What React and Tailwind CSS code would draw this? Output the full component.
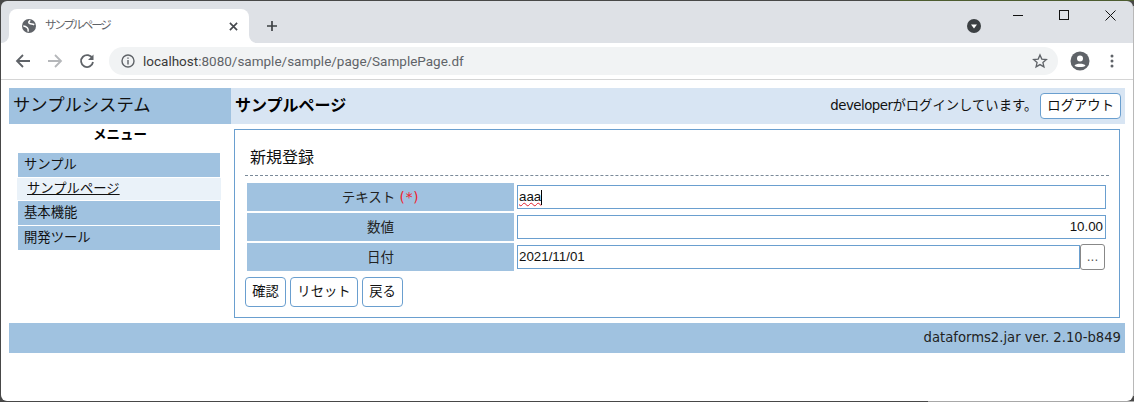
import React from "react";

function Btn({ children, cls = "" }) {
  return <button className={`h-[30px] px-[6px] bg-white border border-[#6a9fcf] rounded-[4px] text-[13.33px] text-[#111] ${cls}`}>{children}</button>;
}
function Row({ label, children, gap = "mb-[2px]" }) {
  return (
    <div className={`flex h-[28px] ${gap}`}>
      <div className="w-[267px] shrink-0 bg-[#a0c2e0] flex items-center justify-center text-[13.5px] text-[#222]">{label}</div>
      <div className="flex-1 pl-[3px] flex items-center">{children}</div>
    </div>
  );
}
const inputCls = "h-[24px] border border-[#6a9fcf] bg-white font-['Liberation_Sans','Noto_Sans_CJK_JP',sans-serif] text-[13.33px] text-[#111] px-[1px] flex items-center";

export default function App() {
  return (
    <div className="w-[1134px] h-[402px] overflow-hidden relative bg-white font-['DejaVu_Sans','Noto_Sans_CJK_JP',sans-serif] text-[#111]">
      {/* Browser chrome */}
      <div className="h-[1px] bg-[#5a5a52]" />
      <div className="h-[42px] bg-[#dee1e6] flex items-end pl-[9px] relative">
        <div className="w-[240px] h-[34px] bg-white rounded-t-[8px] flex items-center pl-[13px] pr-[11px] relative">
          <div className="absolute -left-[8px] bottom-0 w-[8px] h-[8px] bg-white"><div className="w-full h-full bg-[#dee1e6] rounded-br-[8px]" /></div>
          <div className="absolute -right-[8px] bottom-0 w-[8px] h-[8px] bg-white"><div className="w-full h-full bg-[#dee1e6] rounded-bl-[8px]" /></div>
          <svg width="14" height="14" viewBox="0 0 16 16" className="shrink-0">
            <circle cx="8" cy="8" r="8" fill="#5f6368" />
            <path d="M9.500 1.500c-1.500 1-2.500 2.500-1 3.500s3.500.5 5.500 1.500M1.500 8c2.500 0 3.500 1 4.500 2s1.500 2 1 4.500" fill="none" stroke="#fff" strokeWidth="1.800" />
          </svg>
          <span className="ml-[9px] text-[11.5px] text-[#5f6368] flex-1 tracking-[-2.2px]">サンプルページ</span>
          <svg width="9" height="9" viewBox="0 0 10 10"><path d="M1 1l8 8M9 1l-8 8" stroke="#45484d" strokeWidth="1.800" /></svg>
        </div>
        <svg width="10" height="10" viewBox="0 0 12 12" className="ml-[18px] mb-[12px]"><path d="M6 0v12M0 6h12" stroke="#3c4043" strokeWidth="2" /></svg>
        <svg width="14" height="14" viewBox="0 0 14 14" className="absolute left-[967px] top-[18px]">
          <circle cx="7" cy="7" r="7" fill="#3c4043" />
          <path d="M4 5.500h6L7 9.500Z" fill="#fff" />
        </svg>
        <svg width="10" height="1" viewBox="0 0 10 1" className="absolute left-[1013px] top-[14px]"><path d="M0 .5h10" stroke="#111" /></svg>
        <div className="absolute left-[1059px] top-[9px] w-[10px] h-[10px] border border-[#111]" />
        <svg width="11" height="11" viewBox="0 0 11 11" className="absolute left-[1105px] top-[9px]"><path d="M.5.5l10 10M10.500.5l-10 10" stroke="#111" /></svg>
      </div>
      <div className="h-[37px] bg-white border-b border-[#d5d5d5] flex items-center">
        <svg width="16" height="16" viewBox="0 0 16 16" className="ml-[15px]"><path d="M15 8H2M8 2 2 8l6 6" fill="none" stroke="#5f6368" strokeWidth="1.800" /></svg>
        <svg width="16" height="16" viewBox="0 0 16 16" className="ml-[16px]"><path d="M1 8h13M8 2l6 6-6 6" fill="none" stroke="#b5b7ba" strokeWidth="1.800" /></svg>
        <svg width="16" height="16" viewBox="0 0 16 16" className="ml-[16px]"><path d="M13.500 5.500A6 6 0 1 0 14 9" fill="none" stroke="#5f6368" strokeWidth="1.800" /><path d="M14.500 1.500v5.500H9Z" fill="#5f6368" /></svg>
        <div className="ml-[14px] w-[949px] h-[28px] rounded-full bg-[#f1f3f4] flex items-center pl-[12px]">
          <svg width="14" height="14" viewBox="0 0 14 14"><circle cx="7" cy="7" r="6" fill="none" stroke="#5f6368" strokeWidth="1.400" /><path d="M7 6v4.500M7 3.500v1.300" stroke="#5f6368" strokeWidth="1.400" /></svg>
          <span className="ml-[8px] text-[13.5px] text-[#3a3a3a] font-['Roboto',sans-serif]">localhost<span className="text-[#5f6368]">:8080/sample/sample/page/SamplePage.df</span></span>
          <svg width="16" height="16" viewBox="0 0 24 24" className="ml-auto mr-[10px]"><path d="M12 3l2.700 6.200 6.800.6-5.100 4.500 1.500 6.600L12 17.400 6.100 20.900l1.500-6.600L2.500 9.800l6.800-.6Z" fill="none" stroke="#5f6368" strokeWidth="2" /></svg>
        </div>
        <svg width="20" height="20" viewBox="0 0 20 20" className="ml-[12px]">
          <circle cx="10" cy="10" r="9.500" fill="#5f6368" />
          <circle cx="10" cy="7.500" r="3" fill="#fff" />
          <path d="M4.500 14.500c1.500-2.500 9.500-2.500 11 0-1.500 2-9.500 2-11 0Z" fill="#fff" />
        </svg>
        <svg width="4" height="14" viewBox="0 0 4 14" className="ml-[20px]"><circle cx="2" cy="2" r="1.500" fill="#5f6368" /><circle cx="2" cy="7" r="1.500" fill="#5f6368" /><circle cx="2" cy="12" r="1.500" fill="#5f6368" /></svg>
      </div>

      {/* Page */}
      <div className="pt-[8px] pl-[9px] pr-[9px]">
        <div className="flex h-[36px]">
          <div className="w-[222px] bg-[#a0c2e0] flex items-center pl-[4px] text-[17.33px] text-[#111]">サンプルシステム</div>
          <div className="flex-1 bg-[#d8e5f3] flex items-center pl-[4px] pr-[4px]">
            <span className="font-bold text-[16px] text-black">サンプルページ</span>
            <span className="ml-auto text-[13.33px] mr-[3px]"><span className="tracking-[-0.5px]">developer</span>がログインしています。</span>
            <Btn cls="!h-[26px]">ログアウト</Btn>
          </div>
        </div>
        <div className="flex">
          <div className="w-[222px] shrink-0">
            <div className="h-[20px] flex items-center justify-center text-[13.5px] font-bold text-black">メニュー</div>
            <div className="mt-[9px] ml-[9px] w-[202px] text-[13.33px]">
              <div className="h-[24px] bg-[#a0c2e0] flex items-center pl-[6px] mb-[1px]">サンプル</div>
              <div className="h-[22px] bg-[#eaf2f9] flex items-center pl-[10px] mb-[1px] -ml-[1px] w-[204px] underline">サンプルページ</div>
              <div className="h-[24px] bg-[#a0c2e0] flex items-center pl-[6px] mb-[1px]">基本機能</div>
              <div className="h-[24px] bg-[#a0c2e0] flex items-center pl-[6px]">開発ツール</div>
            </div>
          </div>
          <div className="flex-1 pt-[5px] pl-[3px] pr-[5px]">
            <div className="border border-[#6a9fcf] h-[189px] pl-[10px] pr-[10px]">
              <div className="h-[46px] border-b border-dashed border-[#7a8a99] flex items-center pl-[5px] pt-[10px] text-[16px]">新規登録</div>
              <div className="mt-[7px] ml-[2px]">
                <Row label={<span>テキスト <span className="text-[#f0202c] tracking-[0.8px]">(*)</span></span>}>
                  <div className={`${inputCls} w-[589px]`}><span className="underline decoration-wavy decoration-[#e0202c] decoration-1">aaa</span><span className="w-px h-[15px] bg-black" /></div>
                </Row>
                <Row label="数値">
                  <div className={`${inputCls} w-[589px] justify-end pr-[2px]`}>10.00</div>
                </Row>
                <Row label="日付" gap="">
                  <div className={`${inputCls} w-[563px]`}>2021/11/01</div>
                  <button className="w-[25px] h-[26px] border border-[#888] rounded-[3px] bg-white text-[12px] text-[#555]">...</button>
                </Row>
              </div>
              <div className="flex gap-[4px] mt-[6px]">
                <Btn cls="w-[41px]">確認</Btn>
                <Btn cls="w-[68px]">リセット</Btn>
                <Btn cls="w-[41px]">戻る</Btn>
              </div>
            </div>
          </div>
        </div>
        <div className="mt-[5px] h-[30px] bg-[#a0c2e0] flex items-center justify-end pr-[4px] text-[13.2px] text-[#222]">dataforms2.jar ver. 2.10-b849</div>
      </div>

      {/* Window frame over the page */}
      <div className="absolute left-[1px] top-[1px] right-[1px] bottom-[1px] rounded-[6px] shadow-[0_0_0_4px_#484848] pointer-events-none" />
      <div className="absolute left-[900px] right-0 top-0 h-px bg-[#4d5c30]" />
      <div className="absolute right-0 top-[6px] bottom-[6px] w-px bg-[#b8b8b8]" />
      <div className="absolute left-[928px] right-0 bottom-0 h-px bg-[#a8a8a8]" />
    </div>
  );
}
